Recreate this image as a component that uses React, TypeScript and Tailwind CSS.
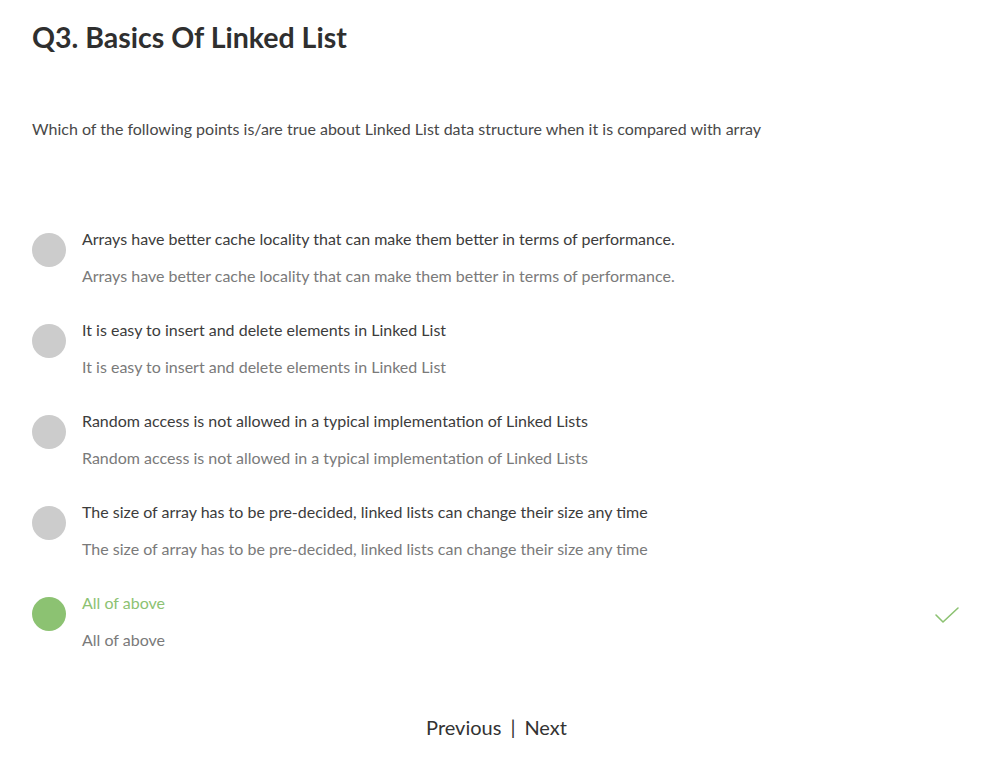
import React from "react";

const options = [
  "Arrays have better cache locality that can make them better in terms of performance.",
  "It is easy to insert and delete elements in Linked List",
  "Random access is not allowed in a typical implementation of Linked Lists",
  "The size of array has to be pre-decided, linked lists can change their size any time",
  "All of above",
];

export default function App() {
  return (
    <div className="w-[997px] h-[768px] bg-white text-[#333] px-[32px]" style={{ fontFamily: "Lato, 'Noto Sans', sans-serif" }}>
      <h1 className="pt-[18px] text-[28.5px] leading-[38px] font-bold text-[#2f2f2f]">Q3. Basics Of Linked List</h1>
      <p className="mt-[62px] text-[16px] leading-[22px] text-[#484848]">
        Which of the following points is/are true about Linked List data structure when it is compared with array
      </p>
      <div className="mt-[88px] flex flex-col gap-[32px]">
        {options.map((o, i) => {
          const correct = i === options.length - 1;
          return (
            <div key={i} className="flex items-start">
              <div className={`mt-[5px] w-[34px] h-[34px] rounded-full shrink-0 ${correct ? "bg-[#8cc272]" : "bg-[#cccccc]"}`} />
              <div className="ml-[16px] flex-1">
                <div className={`text-[16px] leading-[22px] ${correct ? "text-[#8cc272]" : "text-[#3c3c3c]"}`}>{o}</div>
                <div className="mt-[15px] text-[16px] leading-[22px] text-[#7a7a7a]">{o}</div>
              </div>
              {correct && (
                <svg className="mt-[13px] mr-[5px]" width="26" height="20" viewBox="0 0 26 20" fill="none">
                  <path d="M2 10 L9 17 L24 3" stroke="#8cc272" strokeWidth="1.6" strokeLinecap="round" strokeLinejoin="round" />
                </svg>
              )}
            </div>
          );
        })}
      </div>
      <div className="mt-[62px] flex justify-center text-[20px] leading-[28px] text-[#333] pr-[4px]">
        <span>Previous</span>
        <span className="mx-[9px]">|</span>
        <span>Next</span>
      </div>
    </div>
  );
}
